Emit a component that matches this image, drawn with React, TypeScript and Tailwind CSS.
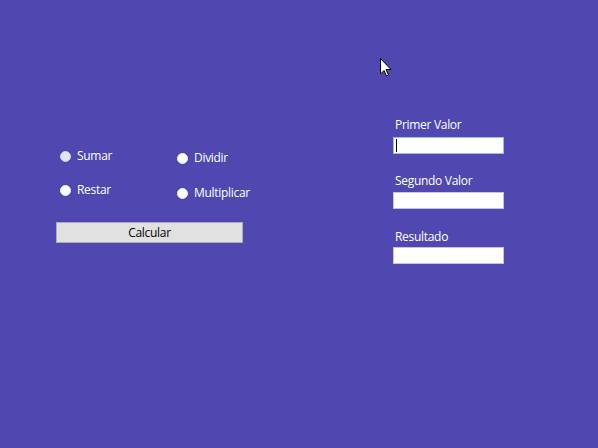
import React from "react";

function Radio({ label, dim }: { label: string; dim?: boolean }) {
  return (
    <div className="flex items-center gap-[6px] h-[14px]">
      <div
        className={
          dim
            ? "w-[11px] h-[11px] rounded-full bg-[#e6e4ee] border border-[#d2cee6]"
            : "w-[11px] h-[11px] rounded-full bg-white border border-[#f0f0f8]"
        }
      />
      <span className="text-[12px] leading-[14px] text-white tracking-[-0.3px]">{label}</span>
    </div>
  );
}

function Field({ label, focused, labelClass }: { label: string; focused?: boolean; labelClass: string }) {
  return (
    <div className="flex flex-col">
      <div className={"h-[15px] leading-[15px] text-[12px] text-white pl-[2px] tracking-[-0.3px] " + labelClass}>{label}</div>
      <div
        className={
          focused
            ? "relative w-[111px] h-[17px] bg-white border border-[#9fb9e8]"
            : "relative w-[111px] h-[17px] bg-white border border-[#c4c2dc]"
        }
      >
        {focused && <div className="absolute left-[2px] top-[1px] w-[1px] h-[13px] bg-black" />}
      </div>
    </div>
  );
}

export default function App() {
  return (
    <div
      className="relative w-[598px] h-[448px] bg-[#5048b0] flex overflow-hidden"
      style={{ fontFamily: '"Open Sans", "Noto Sans", sans-serif' }}
    >
      <div className="w-[393px] pl-[56px] pt-[149px] flex flex-col">
        <div className="flex">
          <div className="w-[121px] pl-[4px] flex flex-col gap-[20px]">
            <Radio label="Sumar" dim />
            <Radio label="Restar" />
          </div>
          <div className="pt-[2px] flex flex-col gap-[21px]">
            <Radio label="Dividir" />
            <Radio label="Multiplicar" />
          </div>
        </div>
        <button className="mt-[22px] w-[187px] h-[21px] bg-[#e1e1e1] border border-[#adadad] text-[12px] leading-[19px] text-black text-center tracking-[-0.3px]">
          Calcular
        </button>
      </div>
      <div className="pt-[117px] flex flex-col gap-[18px]">
        <Field label="Primer Valor" focused labelClass="mb-[5px]" />
        <Field label="Segundo Valor" labelClass="mt-[1px] mb-[4px]" />
        <Field label="Resultado" labelClass="mt-[2px] mb-[3px]" />
      </div>
      <svg
        className="absolute left-[380px] top-[58px]"
        width="12"
        height="19"
        viewBox="0 0 12 19"
      >
        <path d="M0.5 0.5 L0.5 16 L4 12.5 L6.5 18 L8.5 17 L6 11.5 L11 11.5 Z" fill="white" stroke="black" strokeWidth="1" />
      </svg>
    </div>
  );
}
